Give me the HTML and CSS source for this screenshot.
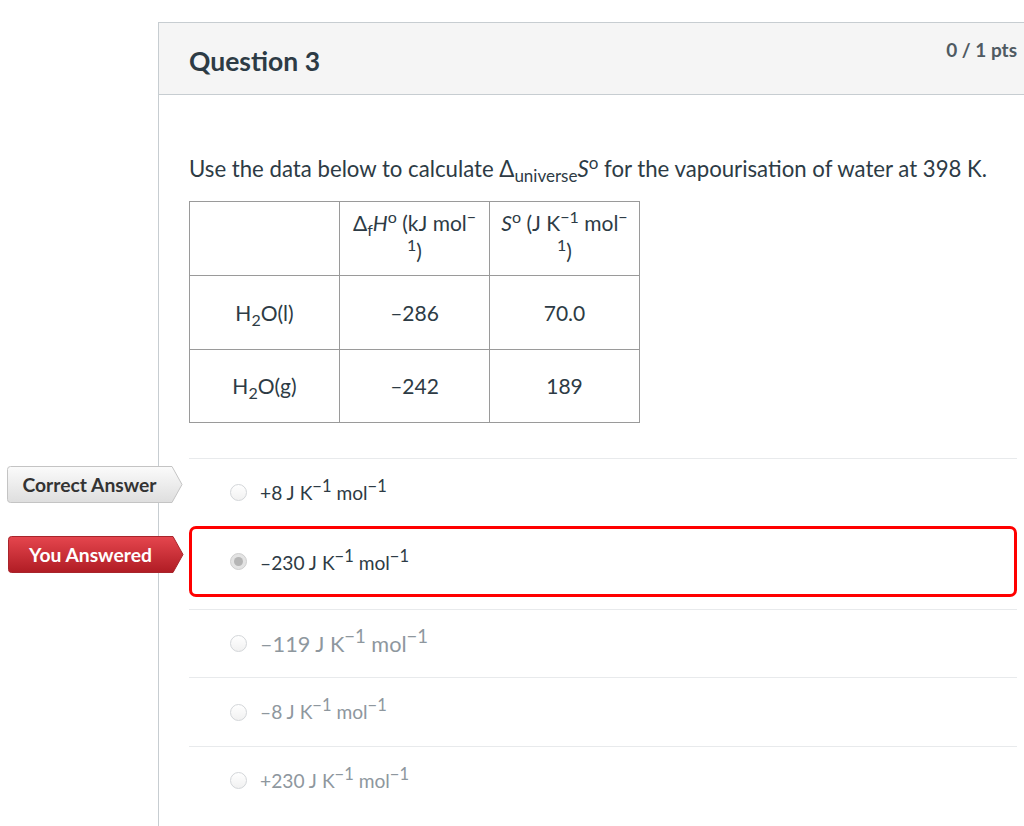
FILE: index.html
```html
<!DOCTYPE html>
<html>
<head>
<meta charset="utf-8">
<link rel="stylesheet" href="styles.css">
</head>
<body>
<div class="card">
  <div class="card-header">
    <h2 class="q-title">Question 3</h2>
    <div class="q-pts">0 / 1 pts</div>
  </div>
  <div class="card-body">
    <p class="q-text">Use the data below to calculate Δ<sub>universe</sub><i>S</i><sup>o</sup> for the vapourisation of water at 398 K.</p>
    <table class="data">
      <tr class="r-head">
        <td></td>
        <td>Δ<sub>f</sub><i>H</i><sup>o</sup> (kJ mol<sup>−</sup><br><sup>1</sup>)</td>
        <td><i>S</i><sup>o</sup> (J K<sup>−1</sup> mol<sup>−</sup><br><sup>1</sup>)</td>
      </tr>
      <tr class="r1">
        <td>H<sub>2</sub>O(l)</td>
        <td>–286</td>
        <td>70.0</td>
      </tr>
      <tr class="r2">
        <td>H<sub>2</sub>O(g)</td>
        <td>–242</td>
        <td>189</td>
      </tr>
    </table>

    <div class="answers">
      <div class="answer a1">
        <div class="tag tag-correct">
          <svg class="tag-bg" width="176" height="37" viewBox="0 0 176 37">
            <defs>
              <linearGradient id="gGray" x1="0" y1="0" x2="0" y2="1">
                <stop offset="0" stop-color="#fbfbfb"/>
                <stop offset="1" stop-color="#dedede"/>
              </linearGradient>
            </defs>
            <path d="M3.5 0.5 H165 L175 18.5 L165 36.5 H3.5 Q0.5 36.5 0.5 33.5 V3.5 Q0.5 0.5 3.5 0.5 Z" fill="url(#gGray)" stroke="#c4c4c4"/>
          </svg>
          <span class="tag-text">Correct Answer</span>
        </div>
        <span class="radio"></span>
        <span class="ans-text dark">+8 J K<sup>−1</sup> mol<sup>−1</sup></span>
      </div>
      <div class="answer a2 wrong">
        <div class="tag tag-you">
          <svg class="tag-bg" width="176" height="37" viewBox="0 0 176 37">
            <defs>
              <linearGradient id="gRed" x1="0" y1="0" x2="0" y2="1">
                <stop offset="0" stop-color="#e5464e"/>
                <stop offset="1" stop-color="#b01c24"/>
              </linearGradient>
            </defs>
            <path d="M3.5 0.5 H165 L175 18.5 L165 36.5 H3.5 Q0.5 36.5 0.5 33.5 V3.5 Q0.5 0.5 3.5 0.5 Z" fill="url(#gRed)" stroke="#a8242b"/>
          </svg>
          <span class="tag-text">You Answered</span>
        </div>
        <span class="radio checked"></span>
        <span class="ans-text dark">–230 J K<sup>−1</sup> mol<sup>−1</sup></span>
      </div>
      <div class="answer a3">
        <span class="radio"></span>
        <span class="ans-text muted big">–119 J K<sup>−1</sup> mol<sup>−1</sup></span>
      </div>
      <div class="answer a4">
        <span class="radio"></span>
        <span class="ans-text muted">–8 J K<sup>−1</sup> mol<sup>−1</sup></span>
      </div>
      <div class="answer a5">
        <span class="radio"></span>
        <span class="ans-text muted">+230 J K<sup>−1</sup> mol<sup>−1</sup></span>
      </div>
    </div>
  </div>
</div>
</body>
</html>
```
FILE: styles.css
```css
html, body {
  margin: 0;
  padding: 0;
  background: #ffffff;
}
body {
  font-family: Lato, "Open Sans", "Liberation Sans", sans-serif;
  color: #2d3b45;
  overflow: hidden;
  height: 826px;
}
.card {
  margin: 22px 0 0 158px;
  width: 866px;
  border: 1px solid #c7cdd1;
  border-bottom: none;
  border-right: none;
  min-height: 820px;
  box-sizing: border-box;
}
.card-header {
  height: 71px;
  background: #f5f5f5;
  border-bottom: 1px solid #c7cdd1;
  display: flex;
  justify-content: space-between;
  align-items: flex-start;
  padding: 0 7px 0 30px;
}
.q-title {
  margin: 23px 0 0 0;
  font-size: 26.5px;
  line-height: 30px;
  font-weight: 700;
  color: #2d3b45;
}
.q-pts {
  margin-top: 16px;
  font-size: 19px;
  line-height: 22px;
  font-weight: 700;
  color: #4f5a62;
}
.card-body {
  padding: 60px 7px 0 30px;
}
.q-text {
  margin: 0 0 18px 0;
  font-size: 22.2px;
  line-height: 28px;
}
.q-text sub {
  font-size: 17px;
  line-height: 0;
  vertical-align: -5px;
}
.q-text sup {
  font-size: 17px;
  line-height: 0;
  vertical-align: 8px;
}
.data {
  border-collapse: collapse;
  font-size: 21px;
}
.data td {
  width: 149px;
  border: 1px solid #9a9a9a;
  text-align: center;
  padding: 0;
  line-height: 28px;
}
.data .r-head td {
  height: 74px;
  vertical-align: top;
  padding-top: 7px;
  box-sizing: border-box;
}
.data .r1 td { height: 73px; }
.data .r2 td { height: 72px; }
.data sub {
  font-size: 16px;
  line-height: 0;
  vertical-align: -5px;
}
.data sup {
  font-size: 16px;
  line-height: 0;
  vertical-align: 8px;
}
.answers {
  margin-top: 35px;
}
.answer {
  position: relative;
  display: flex;
  align-items: center;
  height: 67px;
  padding-left: 41px;
  border-top: 1px solid #e8eaec;
}
.answer.wrong {
  height: 65px;
  border: 3px solid #ff0000;
  border-radius: 7px;
  padding-left: 38px;
  margin-bottom: 12px;
}
.answer.a3 { height: 67px; }
.answer.a4 { height: 68px; }
.radio {
  width: 15px;
  height: 15px;
  border-radius: 50%;
  border: 1px solid #d3d6d9;
  background: linear-gradient(#ffffff, #f1f1f1);
  flex: none;
}
.radio.checked {
  background: #e3e3e3;
  border-color: #cfcfcf;
  position: relative;
}
.radio.checked::after {
  content: "";
  position: absolute;
  left: 3px;
  top: 3px;
  width: 9px;
  height: 9px;
  border-radius: 50%;
  background: #b5b5b5;
}
.ans-text {
  margin-left: 13px;
  font-size: 19.2px;
  line-height: 24px;
}
.ans-text sup {
  font-size: 16.5px;
  line-height: 0;
  vertical-align: 8px;
}
.ans-text.dark { color: #2d3b45; }
.ans-text.muted { color: #8e979e; }
.ans-text.big { font-size: 21.7px; }
.ans-text.big sup { font-size: 18.5px; vertical-align: 9px; }
.a2 .ans-text { margin-top: 2px; }

.tag {
  position: absolute;
  width: 176px;
  height: 37px;
  display: flex;
  align-items: center;
}
.tag-correct {
  left: -182px;
  top: 7px;
}
.tag-you {
  left: -184px;
  top: 7px;
}
.tag-bg {
  position: absolute;
  left: 0;
  top: 0;
}
.tag-text {
  position: relative;
  width: 165px;
  text-align: center;
  font-size: 19.3px;
  font-weight: 700;
}
.tag-correct .tag-text { color: #333333; }
.tag-you .tag-text { color: #ffffff; }
```
